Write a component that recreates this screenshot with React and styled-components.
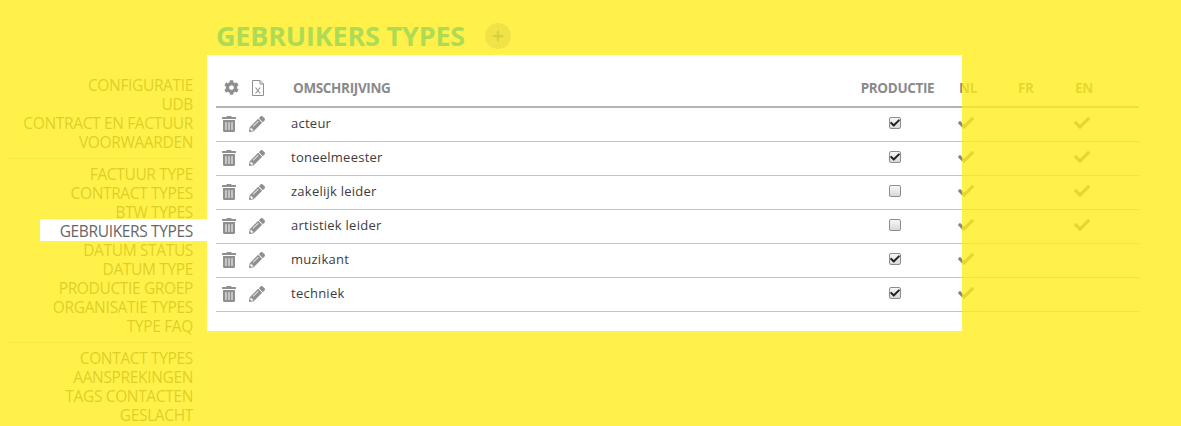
import styled, { createGlobalStyle } from "styled-components";
import { FaCog, FaTrashAlt, FaPencilAlt, FaCheck, FaPlus } from "react-icons/fa";

const GlobalStyle = createGlobalStyle`
  html, body {
    margin: 0;
    height: 426px;
    overflow: hidden;
    background: #fff;
  }
  body {
    font-family: "Open Sans", "Noto Sans", sans-serif;
  }
`;

const Page = styled.div`
  position: relative;
  width: 1181px;
  height: 426px;
  display: flex;
  overflow: hidden;
`;

// yellow layer over the page with a hole for the panel and the active menu item
const Overlay = styled.div`
  position: absolute;
  inset: 0;
  pointer-events: none;
  background: rgba(255, 237, 23, 0.78);
  clip-path: polygon(evenodd, 0 0, 1181px 0, 1181px 426px, 0 426px, 0 0, 207px 55px, 962px 55px, 962px 331px, 207px 331px, 207px 241px, 40px 241px, 40px 219px, 207px 219px, 207px 55px, 0 0);
`;

const Sidebar = styled.nav`
  width: 207px;
  flex: none;
  padding-top: 76px;
  box-sizing: border-box;
`;

const MenuGroup = styled.div`
  margin: 0 14px 0 8px;
  padding: 0 0 6px;
  & + & {
    border-top: 1px solid #ddd;
    padding-top: 6px;
  }
`;

const MenuItem = styled.div`
  height: 19px;
  line-height: 19px;
  font-size: 15.5px;
  letter-spacing: -0.35px;
  text-align: right;
  color: #666;
  white-space: nowrap;
`;

const Main = styled.main`
  flex: 1;
  padding-left: 9px;
`;

const TitleRow = styled.header`
  position: relative;
  z-index: 2;
  height: 71px;
  display: flex;
  align-items: flex-start;
  gap: 20px;
  padding-top: 21px;
  box-sizing: border-box;
`;

const Title = styled.h1`
  margin: 0;
  font-size: 27px;
  line-height: 30px;
  font-weight: 700;
  letter-spacing: -0.2px;
  color: #aedb53;
`;

const AddButton = styled.button`
  width: 26px;
  height: 26px;
  margin-top: 2px;
  padding: 0;
  border: none;
  border-radius: 50%;
  background: #f0e348;
  color: #d6d03a;
  font-size: 12px;
  display: flex;
  align-items: center;
  justify-content: center;
`;

const Grid = styled.div`
  width: 923px;
`;

const Row = styled.div`
  display: grid;
  grid-template-columns: 28px 47px 562px 84px 59px 57px 86px;
  align-items: center;
  height: ${(p) => (p.$head ? "37px" : "34px")};
  padding-bottom: ${(p) => (p.$head ? "2px" : "1px")};
  box-sizing: border-box;
  border-bottom: ${(p) => (p.$head ? "2px solid #b4b4b4" : "1px solid #c4c4c4")};
`;

const HeadCell = styled.div`
  font-size: 13.5px;
  font-weight: 700;
  letter-spacing: -0.35px;
  color: #8a8a8a;
  text-align: ${(p) => (p.$center ? "center" : "left")};
  padding-left: ${(p) => p.$pad || 0}px;
  white-space: nowrap;
`;

const IconCell = styled.div`
  display: flex;
  justify-content: flex-start;
  color: #8f8f8f;
  font-size: ${(p) => p.$size || 16}px;
  padding-left: ${(p) => p.$pad || 0}px;
`;

const NameCell = styled.div`
  font-size: 13px;
  letter-spacing: 0.25px;
  color: #3c3c3c;
  padding-bottom: 2px;
`;

const CheckCell = styled.div`
  display: flex;
  justify-content: center;
  padding-bottom: 3px;
`;

const Box = styled.span`
  width: 12px;
  height: 12px;
  box-sizing: border-box;
  border: 1px solid #8e8e8e;
  border-radius: 2px;
  background: linear-gradient(#f8f8f8, #d8d8d8);
  display: flex;
  align-items: center;
  justify-content: center;
  color: #222;
  font-size: 10px;
`;

const LangCell = styled.div`
  color: #888;
  font-size: 16px;
  display: flex;
  padding-bottom: 3px;
  padding-left: ${(p) => p.$pad || 0}px;
`;

const XlsIcon = () => (
  <svg width="14" height="16" viewBox="0 0 14 16" fill="none" stroke="#8f8f8f" strokeWidth="1">
    <path d="M1.5 .5H9L12.5 4V15.5H1.5Z" />
    <path d="M9 .5V4H12.5" />
    <path d="M4.5 7.5L9.2 13.5M9.2 7.5L4.5 13.5" strokeWidth="1.1" />
  </svg>
);

const menu = [
  ["CONFIGURATIE", "UDB", "CONTRACT EN FACTUUR", "VOORWAARDEN"],
  ["FACTUUR TYPE", "CONTRACT TYPES", "BTW TYPES", "GEBRUIKERS TYPES", "DATUM STATUS", "DATUM TYPE", "PRODUCTIE GROEP", "ORGANISATIE TYPES", "TYPE FAQ"],
  ["CONTACT TYPES", "AANSPREKINGEN", "TAGS CONTACTEN", "GESLACHT"],
];

const rows = [
  { name: "acteur", production: true, nl: true, en: true },
  { name: "toneelmeester", production: true, nl: true, en: true },
  { name: "zakelijk leider", production: false, nl: true, en: true },
  { name: "artistiek leider", production: false, nl: true, en: true },
  { name: "muzikant", production: true, nl: true, en: false },
  { name: "techniek", production: true, nl: true, en: false },
];

export default function App() {
  return (
    <Page>
      <GlobalStyle />
      <Sidebar>
        {menu.map((group, i) => (
          <MenuGroup key={i}>
            {group.map((item) => (
              <MenuItem key={item}>{item}</MenuItem>
            ))}
          </MenuGroup>
        ))}
      </Sidebar>
      <Main>
        <TitleRow>
          <Title>GEBRUIKERS TYPES</Title>
          <AddButton aria-label="toevoegen"><FaPlus /></AddButton>
        </TitleRow>
        <Grid>
          <Row $head>
            <IconCell $size={15} $pad={8}><FaCog /></IconCell>
            <IconCell $pad={7}><XlsIcon /></IconCell>
            <HeadCell $pad={2}>OMSCHRIJVING</HeadCell>
            <HeadCell $center $pad={5}>PRODUCTIE</HeadCell>
            <HeadCell $pad={22}>NL</HeadCell>
            <HeadCell $pad={22}>FR</HeadCell>
            <HeadCell $pad={22}>EN</HeadCell>
          </Row>
          {rows.map((row) => (
            <Row key={row.name}>
              <IconCell $pad={5}><FaTrashAlt /></IconCell>
              <IconCell $pad={5}><FaPencilAlt /></IconCell>
              <NameCell>{row.name}</NameCell>
              <CheckCell>
                <Box role="checkbox" aria-checked={row.production}>
                  {row.production && <FaCheck />}
                </Box>
              </CheckCell>
              <LangCell $pad={21}>{row.nl && <FaCheck />}</LangCell>
              <LangCell />
              <LangCell $pad={21}>{row.en && <FaCheck />}</LangCell>
            </Row>
          ))}
        </Grid>
      </Main>
      <Overlay />
    </Page>
  );
}
